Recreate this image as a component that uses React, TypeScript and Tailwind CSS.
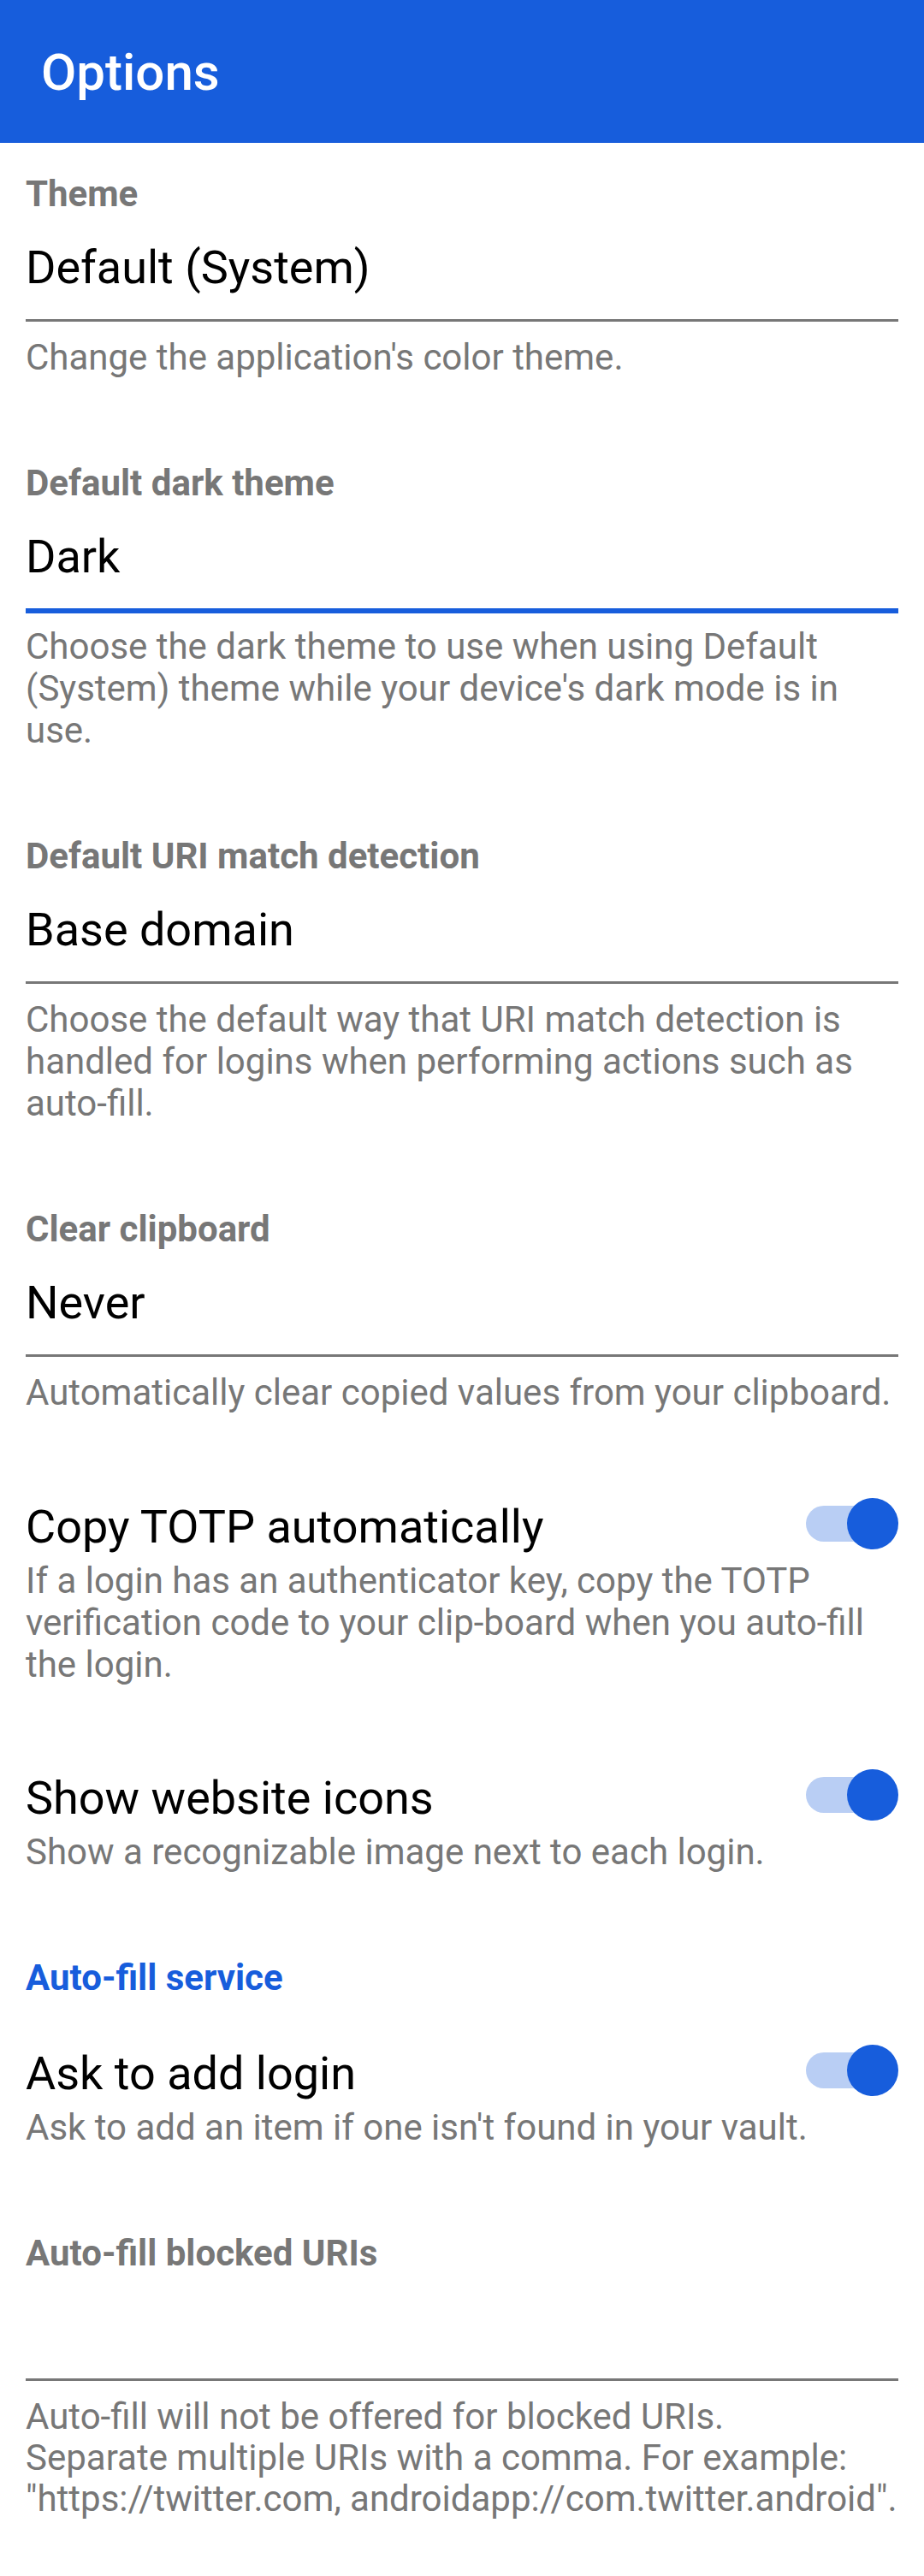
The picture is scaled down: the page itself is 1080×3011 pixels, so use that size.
import React from "react";

type SelectProps = {
  label: string;
  value?: string;
  help: string;
  focused?: boolean;
};

function SelectField({ label, value, help, focused }: SelectProps) {
  return (
    <section className="mt-[101px] first:mt-0">
      <div className="text-[42px] font-bold leading-[44px] text-[#777777]">{label}</div>
      <div className="mt-[32px] h-[64px] text-[54px] leading-[64px] text-black">{value}</div>
      {focused ? (
        <div className="mt-[28px] h-[6px] bg-[#175DDC]" />
      ) : (
        <div className="mt-[28px] h-[3px] bg-[#777777]" />
      )}
      <p className={`${focused ? "mt-[14px]" : "mt-[17px]"} text-[42px] leading-[49px] text-[#777777]`}>
        {help}
      </p>
    </section>
  );
}

function Switch() {
  return (
    <div className="relative -mt-[2px] h-[60px] w-[108px] shrink-0">
      <div className="absolute left-0 top-[9px] h-[42px] w-[102px] rounded-full bg-[#B9CEF4]" />
      <div className="absolute right-0 top-0 h-[60px] w-[60px] rounded-full bg-[#175DDC]" />
    </div>
  );
}

function ToggleRow({ title, help, className }: { title: string; help: string; className: string }) {
  return (
    <section className={className}>
      <div className="flex items-start justify-between">
        <div className="text-[54px] leading-[64px] text-black">{title}</div>
        <Switch />
      </div>
      <p className="mt-[6px] text-[42px] leading-[49px] text-[#777777]">{help}</p>
    </section>
  );
}

export default function App() {
  return (
    <main className="min-h-[3011px] w-[1080px] bg-white font-['Roboto','Liberation_Sans',sans-serif]">
      <header className="h-[167px] bg-[#175DDC] pl-[48px] pt-[50px]">
        <h1 className="text-[60px] font-medium leading-[70px] text-white">Options</h1>
      </header>

      <div className="px-[30px] pb-[60px] pt-[38px]">
        <SelectField
          label="Theme"
          value="Default (System)"
          help="Change the application's color theme."
        />
        <SelectField
          label="Default dark theme"
          value="Dark"
          focused
          help="Choose the dark theme to use when using Default (System) theme while your device's dark mode is in use."
        />
        <SelectField
          label="Default URI match detection"
          value="Base domain"
          help="Choose the default way that URI match detection is handled for logins when performing actions such as auto-fill."
        />
        <SelectField
          label="Clear clipboard"
          value="Never"
          help="Automatically clear copied values from your clipboard."
        />

        <ToggleRow
          className="mt-[101px]"
          title="Copy TOTP automatically"
          help="If a login has an authenticator key, copy the TOTP verification code to your clip-board when you auto-fill the login."
        />
        <ToggleRow
          className="mt-[100px]"
          title="Show website icons"
          help="Show a recognizable image next to each login."
        />

        <h2 className="mt-[101px] text-[42px] font-bold leading-[44px] text-[#175DDC]">
          Auto-fill service
        </h2>
        <ToggleRow
          className="mt-[58px]"
          title="Ask to add login"
          help="Ask to add an item if one isn't found in your vault."
        />

        <section className="mt-[101px]">
          <div className="text-[42px] font-bold leading-[44px] text-[#777777]">Auto-fill blocked URIs</div>
          <div className="mt-[124px] h-[3px] bg-[#777777]" />
          <p className="mt-[18px] text-[42px] leading-[48px] text-[#777777]">
            Auto-fill will not be offered for blocked URIs.
            <br />
            Separate multiple URIs with a comma. For example:
            "https://twitter.com, androidapp://com.twitter.android".
          </p>
        </section>
      </div>
    </main>
  );
}
